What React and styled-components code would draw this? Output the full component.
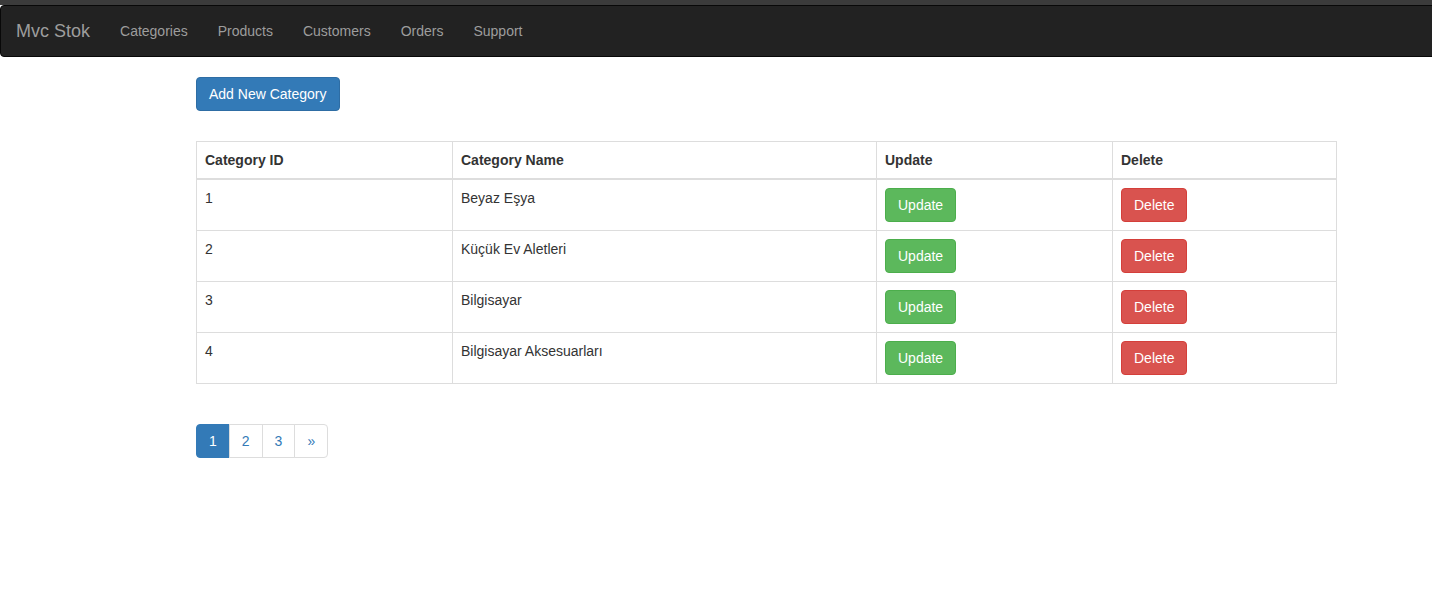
import React from "react";
import styled, { createGlobalStyle } from "styled-components";

const Global = createGlobalStyle`
  html, body { margin: 0; padding: 0; background: #fff; }
  body {
    font-family: "Liberation Sans", Arial, Helvetica, sans-serif;
    font-size: 14px;
    line-height: 1.42857143;
    color: #333;
  }
  * { box-sizing: border-box; }
`;

const TopStrip = styled.div`
  height: 5px;
  background: #3b3b3b;
`;

const Navbar = styled.nav`
  display: flex;
  align-items: center;
  height: 52px;
  width: calc(100% + 8px);
  background: #222;
  border: 1px solid #080808;
  border-radius: 4px;
  margin-bottom: 20px;
`;

const Brand = styled.a`
  padding: 15px;
  font-size: 18px;
  line-height: 20px;
  color: #9d9d9d;
  text-decoration: none;
`;

const NavLink = styled.a`
  padding: 15px;
  line-height: 20px;
  color: #9d9d9d;
  text-decoration: none;
`;

const Container = styled.main`
  width: 1140px;
  margin-left: 196px;
`;

const Btn = styled.button`
  display: inline-block;
  font-family: inherit;
  font-size: 14px;
  line-height: 20px;
  padding: 6px 12px;
  border-radius: 4px;
  border: 1px solid ${(p) => p.$border};
  background: ${(p) => p.$bg};
  color: #fff;
  cursor: pointer;
`;

const Table = styled.table`
  width: 100%;
  border-collapse: collapse;
  border: 1px solid #ddd;
  margin-top: 30px;
  margin-bottom: 20px;
  table-layout: fixed;
`;

const Th = styled.th`
  text-align: left;
  font-weight: bold;
  padding: 8px;
  line-height: 20px;
  border: 1px solid #ddd;
  border-bottom: 2px solid #ddd;
  vertical-align: bottom;
  width: ${(p) => p.$w}px;
`;

const Td = styled.td`
  padding: 8px;
  line-height: 20px;
  border: 1px solid #ddd;
  vertical-align: top;
  height: 51px;
`;

const Pagination = styled.ul`
  display: inline-flex;
  list-style: none;
  padding: 0;
  margin: 20px 0;
`;

const PageItem = styled.li`
  a {
    display: block;
    padding: 6px 12px;
    line-height: 20px;
    margin-left: -1px;
    text-decoration: none;
    border: 1px solid ${(p) => (p.$active ? "#337ab7" : "#ddd")};
    background: ${(p) => (p.$active ? "#337ab7" : "#fff")};
    color: ${(p) => (p.$active ? "#fff" : "#337ab7")};
  }
  &:first-child a {
    margin-left: 0;
    border-radius: 4px 0 0 4px;
  }
  &:last-child a {
    border-radius: 0 4px 4px 0;
  }
`;

const rows = [
  [1, "Beyaz Eşya"],
  [2, "Küçük Ev Aletleri"],
  [3, "Bilgisayar"],
  [4, "Bilgisayar Aksesuarları"],
];

export default function App() {
  return (
    <>
      <Global />
      <TopStrip />
      <Navbar>
        <Brand href="#">Mvc Stok</Brand>
        <NavLink href="#">Categories</NavLink>
        <NavLink href="#">Products</NavLink>
        <NavLink href="#">Customers</NavLink>
        <NavLink href="#">Orders</NavLink>
        <NavLink href="#">Support</NavLink>
      </Navbar>
      <Container>
        <Btn $bg="#337ab7" $border="#2e6da4">Add New Category</Btn>
        <Table>
          <thead>
            <tr>
              <Th $w={256}>Category ID</Th>
              <Th $w={424}>Category Name</Th>
              <Th $w={236}>Update</Th>
              <Th $w={224}>Delete</Th>
            </tr>
          </thead>
          <tbody>
            {rows.map(([id, name]) => (
              <tr key={id}>
                <Td>{id}</Td>
                <Td>{name}</Td>
                <Td>
                  <Btn $bg="#5cb85c" $border="#4cae4c">Update</Btn>
                </Td>
                <Td>
                  <Btn $bg="#d9534f" $border="#d43f3a">Delete</Btn>
                </Td>
              </tr>
            ))}
          </tbody>
        </Table>
        <Pagination>
          <PageItem $active><a href="#">1</a></PageItem>
          <PageItem><a href="#">2</a></PageItem>
          <PageItem><a href="#">3</a></PageItem>
          <PageItem><a href="#">»</a></PageItem>
        </Pagination>
      </Container>
    </>
  );
}
